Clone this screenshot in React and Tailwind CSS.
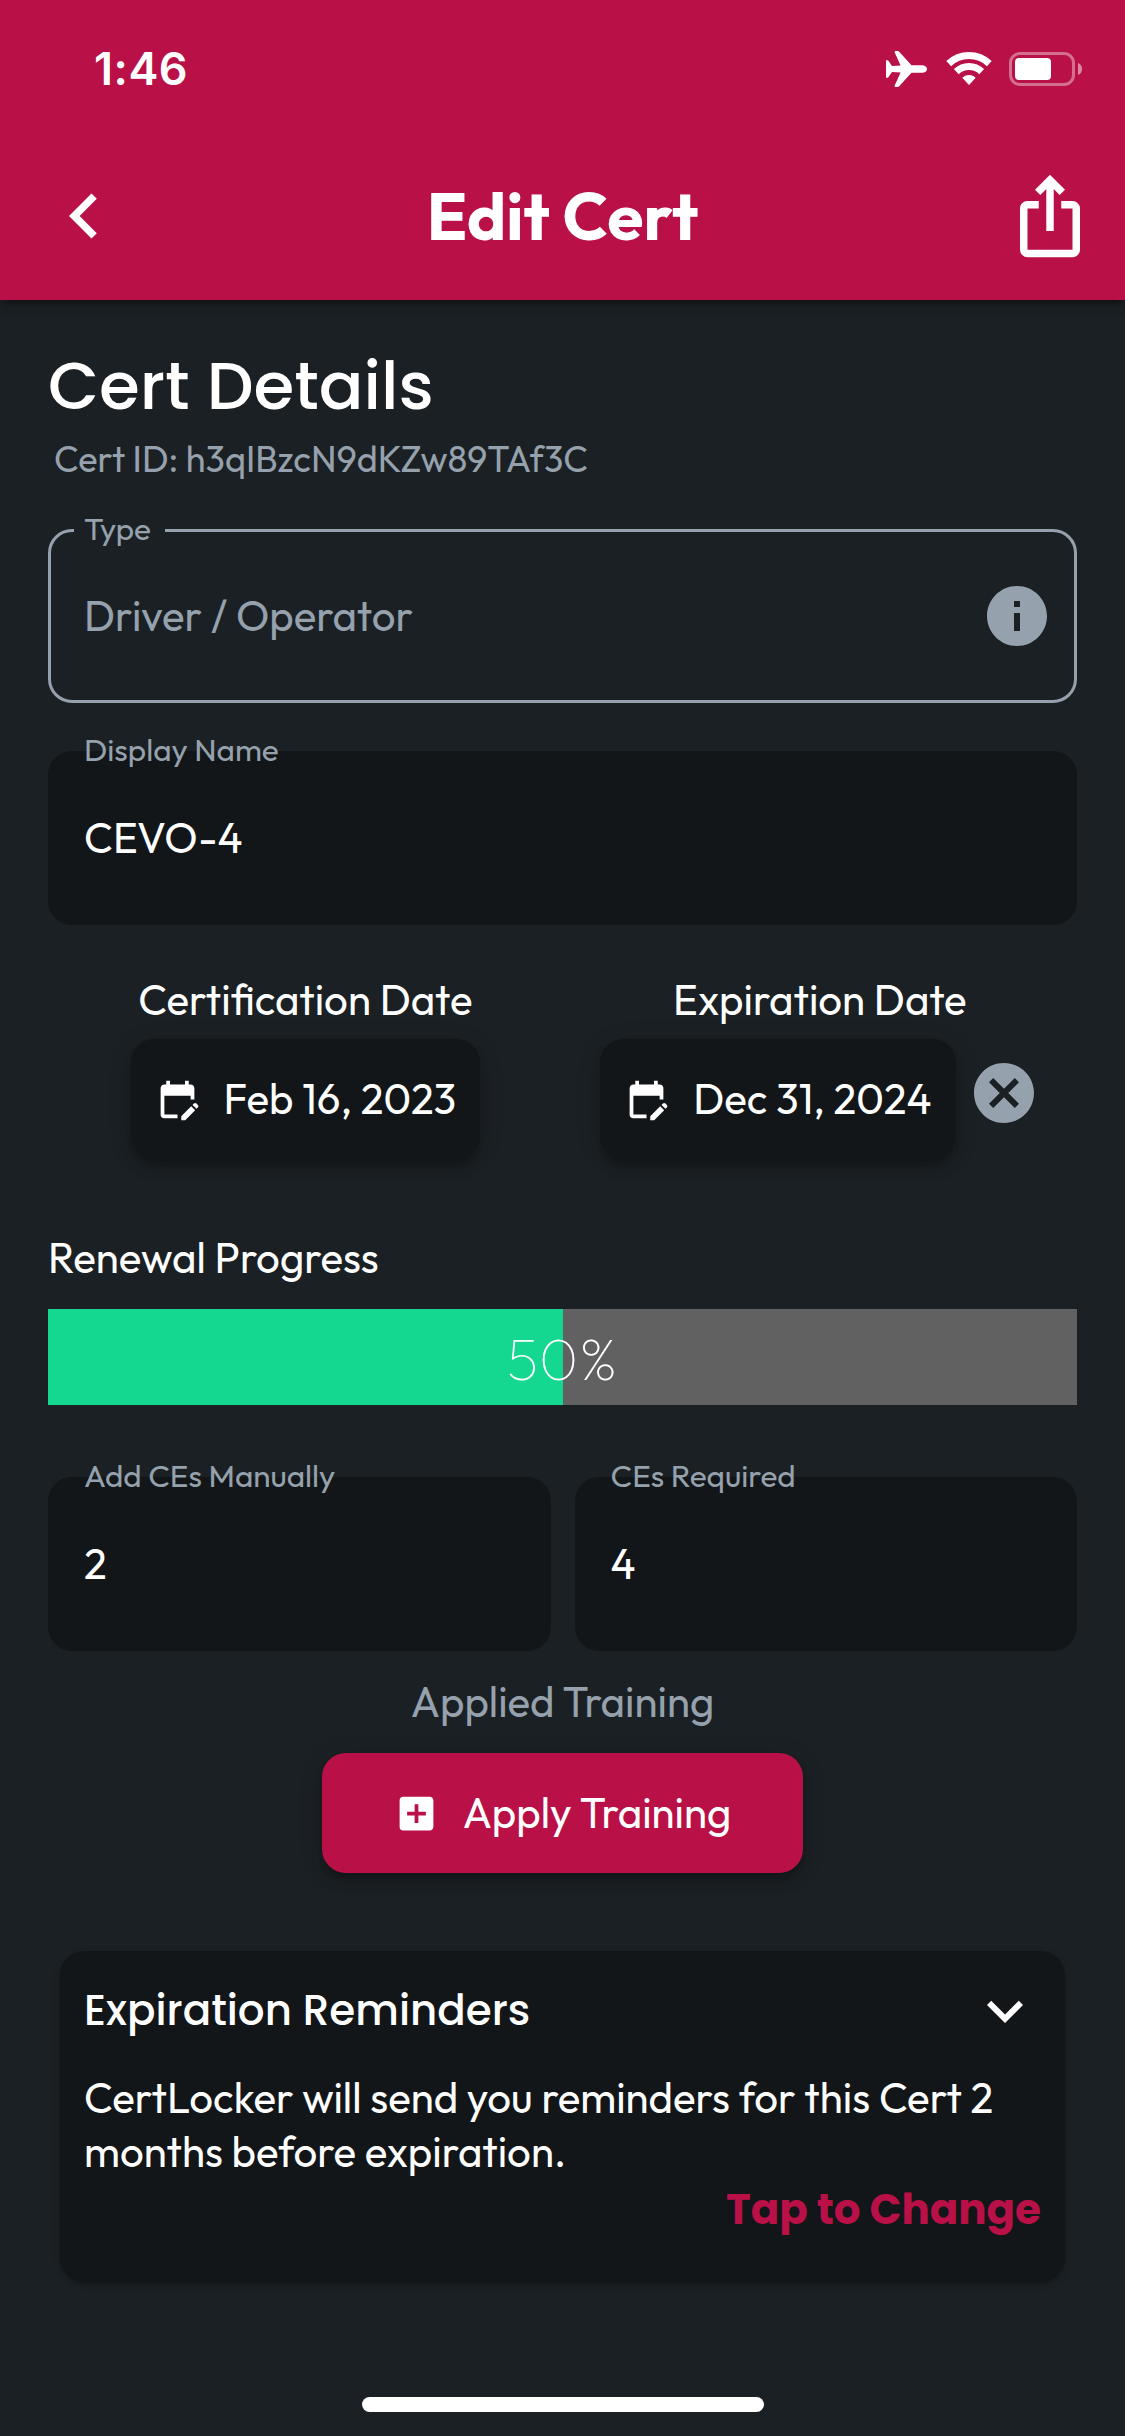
import {
  MdAddBox,
  MdCancel,
  MdEditCalendar,
  MdInfo,
  MdIosShare,
  MdKeyboardArrowDown,
  MdKeyboardArrowLeft,
} from "react-icons/md";

function StatusIcons() {
  return (
    <svg width="200" height="40" viewBox="15 19 200 40" className="block">
      <path
        fill="#fff"
        d="M16 30.3c1.4-.3 2.3.2 2.9 1.2L22 36l8.6-.5-5.9-13c-.3-.9.2-1.5 1-1.5h1.800c.8 0 1.4.4 1.9 1L41.500 35.200H52c3 0 5 1.800 5 3.800s-2 3.800-5 3.800H41.500L29.400 56c-.5.6-1.100 1-1.900 1h-1.800c-.8 0-1.300-.6-1-1.500l5.900-13L22 42l-3.100 4.500c-.6 1-1.500 1.500-2.900 1.200z"
      />
      <g fill="none" stroke="#fff" strokeWidth="7">
        <path d="M78.700 33.600a29.500 29.500 0 0 1 40.600 0" />
        <path d="M86.300 41.600a18.500 18.500 0 0 1 25.400 0" />
      </g>
      <path
        fill="#fff"
        stroke="#fff"
        strokeWidth="1"
        strokeLinejoin="round"
        d="M99 54.500l-6.200-6.700a9.500 9.500 0 0 1 12.400 0z"
      />
      <rect x="140.5" y="23.5" width="63" height="31" rx="9.5" fill="none" stroke="#fff" strokeOpacity=".4" strokeWidth="3" />
      <rect x="145" y="28" width="36" height="22" rx="4" fill="#fff" />
      <path d="M208 33c2.600 1 4 3.300 4 6s-1.400 5-4 6z" fill="#fff" fillOpacity=".5" />
    </svg>
  );
}

function Header() {
  return (
    <header className="h-[300px] bg-[#b91047] shadow-[0_9px_3px_-6px_rgba(0,0,0,0.2),0_6px_6px_rgba(0,0,0,0.14),0_3px_15px_rgba(0,0,0,0.12)]">
      <div className="flex h-[132px] items-center justify-between pt-[6px] pr-[40px] pl-[94px]">
        <span className="font-['Inter',sans-serif] text-[45px] leading-[54px] font-semibold tracking-[0.5px]">
          1:46
        </span>
        <StatusIcons />
      </div>
      <div className="flex h-[168px] items-center justify-between pr-[30px] pl-[39px]">
        <MdKeyboardArrowLeft className="size-[90px]" />
        <h1 className="ml-[-9px] text-[66px] leading-[84px] font-bold">Edit Cert</h1>
        <MdIosShare className="size-[90px]" />
      </div>
    </header>
  );
}

function Field({ label, value, outlined, className = "" }) {
  return (
    <div
      className={`relative flex h-[174px] items-center justify-between rounded-[24px] ${
        outlined
          ? "border-[3px] border-[#95a1ac] pr-[21px] pl-[33px] text-[#95a1ac]"
          : "bg-[#121619] px-[36px]"
      } ${className}`}
    >
      <label
        className={`absolute px-[10.5px] text-[31.5px] leading-[40px] text-[#95a1ac] ${
          outlined ? "top-[-24px] left-[22.5px] w-[91px] bg-[#1b2024]" : "top-[-22px] left-[25.5px]"
        }`}
      >
        {label}
      </label>
      <span className="text-[42px] leading-[54px]">{value}</span>
      {outlined && <MdInfo className="size-[72px]" />}
    </div>
  );
}

function DateButton({ children }) {
  return (
    <button className="flex h-[120px] items-center gap-[24px] rounded-[24px] bg-[#121619] px-[24px] text-[42px] leading-[54px] whitespace-nowrap shadow-[0_9px_9px_-6px_rgba(0,0,0,0.2),0_9px_12px_rgba(0,0,0,0.14),0_3px_24px_rgba(0,0,0,0.12)]">
      <MdEditCalendar className="size-[45px]" />
      {children}
    </button>
  );
}

export default function App() {
  const progress = 50;
  return (
    <div className="flex h-[2436px] w-[1125px] flex-col overflow-hidden bg-[#1b2024] font-['Outfit','Lato',sans-serif] font-normal text-white">
      <Header />

      <main className="flex flex-1 flex-col px-[48px] pt-[40px]">
        <h2 className="font-['Poppins','Inter',sans-serif] text-[66px] leading-[92px] font-medium">Cert Details</h2>
        <p className="mt-[4px] pl-[6px] text-[36px] leading-[46px] text-[#95a1ac]">
          Cert ID: h3qIBzcN9dKZw89TAf3C
        </p>

        <Field label="Type" value="Driver / Operator" outlined className="mt-[47px]" />
        <Field label="Display Name" value="CEVO-4" className="mt-[48px]" />

        <div className="mt-[48px] flex gap-[120px] pl-[82.5px] text-[42px] leading-[54px]">
          <div className="flex flex-col items-center gap-[12px]">
            <span>Certification Date</span>
            <DateButton>Feb 16, 2023</DateButton>
          </div>
          <div className="flex flex-col items-center gap-[12px]">
            <span>Expiration Date</span>
            <div className="flex gap-[12px]">
              <DateButton>Dec 31, 2024</DateButton>
              <MdCancel className="mt-[18px] size-[72px] text-[#95a1ac]" />
            </div>
          </div>
        </div>

        <h3 className="mt-[72px] text-[42px] leading-[54px]">Renewal Progress</h3>
        <div className="relative mt-[24px] h-[96px] bg-[#616161]">
          <div className="h-full bg-[#14d790]" style={{ width: `${progress}%` }} />
          <span className="absolute inset-0 flex items-center justify-center pt-[2px] text-[60px] leading-[76px] font-thin">
            {progress}%
          </span>
        </div>

        <div className="mt-[72px] grid grid-cols-2 gap-[24px]">
          <Field label="Add CEs Manually" value="2" />
          <Field label="CEs Required" value="4" />
        </div>

        <p className="mt-[24px] text-center text-[42px] leading-[54px] text-[#95a1ac]">Applied Training</p>
        <button className="mt-[24px] flex h-[120px] w-[481px] items-center justify-center gap-[24px] self-center rounded-[24px] bg-[#b91047] text-[42px] leading-[54px] shadow-[0_9px_9px_-6px_rgba(0,0,0,0.2),0_9px_12px_rgba(0,0,0,0.14),0_3px_24px_rgba(0,0,0,0.12)]">
          <MdAddBox className="size-[45px]" />
          Apply Training
        </button>

        <section className="mx-[12px] mt-[78px] h-[330px] rounded-[24px] bg-[#121619] p-[24px] shadow-[0_6px_3px_-3px_rgba(0,0,0,0.1),0_3px_3px_rgba(0,0,0,0.08),0_3px_9px_rgba(0,0,0,0.12)]">
          <div className="flex h-[72px] items-center justify-between">
            <h3 className="pb-[2px] font-['Poppins','Inter',sans-serif] text-[42px] leading-[63px] font-medium">
              Expiration Reminders
            </h3>
            <MdKeyboardArrowDown className="size-[72px]" />
          </div>
          <p className="mt-[24px] text-[42px] leading-[54px]">
            CertLocker will send you reminders for this Cert 2 months before expiration.
          </p>
          <p className="text-right font-['Poppins','Inter',sans-serif] text-[42px] leading-[61px] font-bold text-[#b91047]">
            Tap to Change
          </p>
        </section>
      </main>

      <div className="mb-[24px] h-[15px] w-[402px] self-center rounded-full bg-white" />
    </div>
  );
}
